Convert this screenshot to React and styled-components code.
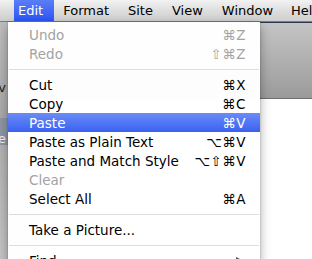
import React from "react";
import styled, { createGlobalStyle } from "styled-components";

const Global = createGlobalStyle`
  html, body { margin: 0; padding: 0; }
  body {
    width: 312px;
    height: 259px;
    overflow: hidden;
    font-family: "DejaVu Sans", "Liberation Sans", sans-serif;
  }
`;

const Screen = styled.div`
  position: relative;
  width: 312px;
  height: 259px;
  overflow: hidden;
  display: flex;
  flex-direction: column;
  background: #ffffff;
`;

const MenuBar = styled.div`
  height: 21px;
  flex: none;
  display: flex;
  align-items: stretch;
  padding-left: 14px;
  background: linear-gradient(#f2f2f2, #dcdcdc 55%, #cfcfcf);
  border-bottom: 1px solid #7d7d7d;
  font-size: 13px;
  white-space: nowrap;
`;

const Title = styled.div`
  display: flex;
  align-items: center;
  padding: 0 ${(p) => p.$pr || 10}px 0 ${(p) => p.$pl || 9}px;
  color: ${(p) => (p.$active ? "#ffffff" : "#000000")};
  background: ${(p) =>
    p.$active ? "linear-gradient(#5b7ef7, #2c55f2)" : "transparent"};
`;

const Desktop = styled.div`
  flex: 1;
  display: flex;
`;

const SidePane = styled.div`
  width: 40px;
  flex: none;
  display: flex;
  flex-direction: column;
  background: linear-gradient(#bdbdbd, #a9a9a9 40.5%, #8f96a3 40.5%, #8f96a3 52%, #b2b2b2 52%, #c4c4c4);
  font-size: 13px;
`;

const SideLabel = styled.div`
  height: 20px;
  margin-top: ${(p) => p.$mt}px;
  display: flex;
  align-items: center;
  justify-content: flex-end;
  padding-right: 34px;
  color: ${(p) => p.$c || "#1c1c1c"};
`;

const MainWindow = styled.div`
  flex: 1;
  display: flex;
  flex-direction: column;
`;

const Toolbar = styled.div`
  height: 75px;
  flex: none;
  border-top: 1px solid #2c3850;
  background: linear-gradient(#c4c4c4, #a8a8a8 70%, #9a9a9a);
  border-bottom: 1px solid #6f6f6f;
`;

const Content = styled.div`
  flex: 1;
  background: #ffffff;
`;

const Menu = styled.div`
  position: absolute;
  left: 8px;
  top: 22px;
  width: 252px;
  padding-top: 3px;
  background: rgba(255, 255, 255, 0.98);
  box-shadow: 0 4px 10px rgba(0, 0, 0, 0.35), 0 0 0 0.5px rgba(0, 0, 0, 0.15);
  font-size: 13.5px;
  white-space: nowrap;
`;

const Item = styled.div`
  height: 19px;
  display: flex;
  align-items: center;
  justify-content: space-between;
  padding: 0 14px 0 21px;
  color: ${(p) => (p.$active ? "#ffffff" : p.$disabled ? "#a3a3a3" : "#000000")};
  background: ${(p) =>
    p.$active ? "linear-gradient(#6a8bf7, #3a62f2)" : "transparent"};
`;

const Shortcut = styled.span`
  letter-spacing: 0.5px;
`;

const Arrow = styled.span`
  width: 0;
  height: 0;
  border-top: 4.5px solid transparent;
  border-bottom: 4.5px solid transparent;
  border-left: 8px solid #555;
  margin-right: 2px;
`;

const Separator = styled.div`
  height: 12px;
  display: flex;
  align-items: center;
  padding: 0 1px;
  &::after {
    content: "";
    flex: 1;
    height: 1px;
    background: #dedede;
  }
`;

const items = [
  { label: "Undo", key: "⌘Z", disabled: true },
  { label: "Redo", key: "⇧⌘Z", disabled: true },
  "sep",
  { label: "Cut", key: "⌘X" },
  { label: "Copy", key: "⌘C" },
  { label: "Paste", key: "⌘V", active: true },
  { label: "Paste as Plain Text", key: "⌥⌘V" },
  { label: "Paste and Match Style", key: "⌥⇧⌘V" },
  { label: "Clear", disabled: true },
  { label: "Select All", key: "⌘A" },
  "sep",
  { label: "Take a Picture..." },
  "sep",
  { label: "Find", submenu: true },
];

export default function App() {
  return (
    <>
      <Global />
      <Screen>
        <MenuBar>
          <Title $active $pl={4} $pr={11}>Edit</Title>
          <Title $pl={9} $pr={9}>Format</Title>
          <Title $pl={10} $pr={10}>Site</Title>
          <Title $pl={9} $pr={10}>View</Title>
          <Title $pl={9} $pr={10}>Window</Title>
          <Title $pl={8}>Help</Title>
        </MenuBar>
        <Desktop>
          <SidePane>
            <SideLabel $mt={55}>v</SideLabel>
            <SideLabel $mt={31} $c="#f2f2f2">e</SideLabel>
          </SidePane>
          <MainWindow>
            <Toolbar />
            <Content />
          </MainWindow>
        </Desktop>
        <Menu>
          {items.map((it, i) =>
            it === "sep" ? (
              <Separator key={i} />
            ) : (
              <Item key={i} $active={it.active} $disabled={it.disabled}>
                <span>{it.label}</span>
                {it.key && <Shortcut>{it.key}</Shortcut>}
                {it.submenu && <Arrow />}
              </Item>
            )
          )}
        </Menu>
      </Screen>
    </>
  );
}
